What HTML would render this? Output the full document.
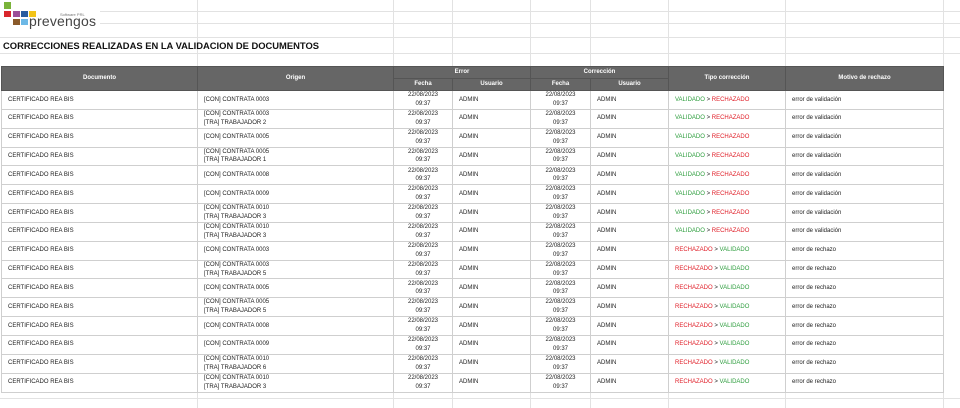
<!DOCTYPE html>
<html><head><meta charset="utf-8"><style>
body{margin:0;width:960px;height:408px;overflow:hidden;background:#fff;font-family:"Liberation Sans",Arial,sans-serif;position:relative}
.g{position:absolute;background:#e2e2e2}
.sq{position:absolute;width:7px;height:6px}
table{position:absolute;left:1px;top:66px;border-collapse:collapse;table-layout:fixed;font-size:6px;color:#222}
td,th{padding:0 0 0 6px;border:1px solid #cfcfcf;white-space:nowrap;overflow:hidden;line-height:8.8px}
th{background:#666;color:#fff;font-weight:bold;text-align:center;padding:0;border-color:#555}
tbody tr{height:18.85px}
td.c{text-align:center;padding:0}
.v{color:#2e9e3e}.r{color:#e0202a}
</style></head><body>
<div class="g" style="left:0;top:11px;width:960px;height:1px"></div>
<div class="g" style="left:0;top:23px;width:960px;height:1px"></div>
<div class="g" style="left:0;top:37px;width:960px;height:1px"></div>
<div class="g" style="left:0;top:53px;width:960px;height:1px"></div>
<div class="g" style="left:0;top:398px;width:960px;height:1px"></div>
<div class="g" style="left:197px;top:0;width:1px;height:408px"></div>
<div class="g" style="left:393px;top:0;width:1px;height:408px"></div>
<div class="g" style="left:452px;top:0;width:1px;height:408px"></div>
<div class="g" style="left:530px;top:0;width:1px;height:408px"></div>
<div class="g" style="left:590px;top:0;width:1px;height:408px"></div>
<div class="g" style="left:668px;top:0;width:1px;height:408px"></div>
<div class="g" style="left:785px;top:0;width:1px;height:408px"></div>
<div class="g" style="left:943px;top:0;width:1px;height:408px"></div>
<div style="position:absolute;left:0;top:0;width:100px;height:28px;background:#fff"></div>
<div class="sq" style="left:4px;top:2px;background:#7ab33a;height:7px"></div>
<div class="sq" style="left:4px;top:11px;background:#d9262c"></div>
<div class="sq" style="left:13px;top:11px;background:#9c4e97"></div>
<div class="sq" style="left:21px;top:11px;background:#2a5d9f"></div>
<div class="sq" style="left:29px;top:11px;background:#f2c318"></div>
<div class="sq" style="left:13px;top:19px;background:#8a5a2b"></div>
<div class="sq" style="left:21px;top:19px;background:#6cb8e6"></div>
<div style="position:absolute;left:60px;top:12px;font-size:4px;color:#777">Software PRL</div>
<div style="position:absolute;left:29px;top:14px;font-size:14px;line-height:14px;color:#444;letter-spacing:0.2px">prevengos</div>
<div style="position:absolute;left:3px;top:40px;font-size:9.4px;font-weight:bold;color:#111">CORRECCIONES REALIZADAS EN LA VALIDACION DE DOCUMENTOS</div>
<table>
<colgroup><col style="width:196px"><col style="width:196px"><col style="width:59px"><col style="width:78px"><col style="width:60px"><col style="width:78px"><col style="width:117px"><col style="width:158px"></colgroup>
<thead>
<tr style="height:12px"><th rowspan="2">Documento</th><th rowspan="2">Origen</th><th colspan="2">Error</th><th colspan="2">Corrección</th><th rowspan="2">Tipo corrección</th><th rowspan="2">Motivo de rechazo</th></tr>
<tr style="height:12px"><th>Fecha</th><th>Usuario</th><th>Fecha</th><th>Usuario</th></tr>
</thead>
<tbody>
<tr><td>CERTIFICADO REA BIS</td><td>[CON] CONTRATA 0003</td><td class="c">22/08/2023<br>09:37</td><td>ADMIN</td><td class="c">22/08/2023<br>09:37</td><td>ADMIN</td><td><span class="v">VALIDADO</span> &gt; <span class="r">RECHAZADO</span></td><td>error de validación</td></tr>
<tr><td>CERTIFICADO REA BIS</td><td>[CON] CONTRATA 0003<br>[TRA] TRABAJADOR 2</td><td class="c">22/08/2023<br>09:37</td><td>ADMIN</td><td class="c">22/08/2023<br>09:37</td><td>ADMIN</td><td><span class="v">VALIDADO</span> &gt; <span class="r">RECHAZADO</span></td><td>error de validación</td></tr>
<tr><td>CERTIFICADO REA BIS</td><td>[CON] CONTRATA 0005</td><td class="c">22/08/2023<br>09:37</td><td>ADMIN</td><td class="c">22/08/2023<br>09:37</td><td>ADMIN</td><td><span class="v">VALIDADO</span> &gt; <span class="r">RECHAZADO</span></td><td>error de validación</td></tr>
<tr><td>CERTIFICADO REA BIS</td><td>[CON] CONTRATA 0005<br>[TRA] TRABAJADOR 1</td><td class="c">22/08/2023<br>09:37</td><td>ADMIN</td><td class="c">22/08/2023<br>09:37</td><td>ADMIN</td><td><span class="v">VALIDADO</span> &gt; <span class="r">RECHAZADO</span></td><td>error de validación</td></tr>
<tr><td>CERTIFICADO REA BIS</td><td>[CON] CONTRATA 0008</td><td class="c">22/08/2023<br>09:37</td><td>ADMIN</td><td class="c">22/08/2023<br>09:37</td><td>ADMIN</td><td><span class="v">VALIDADO</span> &gt; <span class="r">RECHAZADO</span></td><td>error de validación</td></tr>
<tr><td>CERTIFICADO REA BIS</td><td>[CON] CONTRATA 0009</td><td class="c">22/08/2023<br>09:37</td><td>ADMIN</td><td class="c">22/08/2023<br>09:37</td><td>ADMIN</td><td><span class="v">VALIDADO</span> &gt; <span class="r">RECHAZADO</span></td><td>error de validación</td></tr>
<tr><td>CERTIFICADO REA BIS</td><td>[CON] CONTRATA 0010<br>[TRA] TRABAJADOR 3</td><td class="c">22/08/2023<br>09:37</td><td>ADMIN</td><td class="c">22/08/2023<br>09:37</td><td>ADMIN</td><td><span class="v">VALIDADO</span> &gt; <span class="r">RECHAZADO</span></td><td>error de validación</td></tr>
<tr><td>CERTIFICADO REA BIS</td><td>[CON] CONTRATA 0010<br>[TRA] TRABAJADOR 3</td><td class="c">22/08/2023<br>09:37</td><td>ADMIN</td><td class="c">22/08/2023<br>09:37</td><td>ADMIN</td><td><span class="v">VALIDADO</span> &gt; <span class="r">RECHAZADO</span></td><td>error de validación</td></tr>
<tr><td>CERTIFICADO REA BIS</td><td>[CON] CONTRATA 0003</td><td class="c">22/08/2023<br>09:37</td><td>ADMIN</td><td class="c">22/08/2023<br>09:37</td><td>ADMIN</td><td><span class="r">RECHAZADO</span> &gt; <span class="v">VALIDADO</span></td><td>error de rechazo</td></tr>
<tr><td>CERTIFICADO REA BIS</td><td>[CON] CONTRATA 0003<br>[TRA] TRABAJADOR 5</td><td class="c">22/08/2023<br>09:37</td><td>ADMIN</td><td class="c">22/08/2023<br>09:37</td><td>ADMIN</td><td><span class="r">RECHAZADO</span> &gt; <span class="v">VALIDADO</span></td><td>error de rechazo</td></tr>
<tr><td>CERTIFICADO REA BIS</td><td>[CON] CONTRATA 0005</td><td class="c">22/08/2023<br>09:37</td><td>ADMIN</td><td class="c">22/08/2023<br>09:37</td><td>ADMIN</td><td><span class="r">RECHAZADO</span> &gt; <span class="v">VALIDADO</span></td><td>error de rechazo</td></tr>
<tr><td>CERTIFICADO REA BIS</td><td>[CON] CONTRATA 0005<br>[TRA] TRABAJADOR 5</td><td class="c">22/08/2023<br>09:37</td><td>ADMIN</td><td class="c">22/08/2023<br>09:37</td><td>ADMIN</td><td><span class="r">RECHAZADO</span> &gt; <span class="v">VALIDADO</span></td><td>error de rechazo</td></tr>
<tr><td>CERTIFICADO REA BIS</td><td>[CON] CONTRATA 0008</td><td class="c">22/08/2023<br>09:37</td><td>ADMIN</td><td class="c">22/08/2023<br>09:37</td><td>ADMIN</td><td><span class="r">RECHAZADO</span> &gt; <span class="v">VALIDADO</span></td><td>error de rechazo</td></tr>
<tr><td>CERTIFICADO REA BIS</td><td>[CON] CONTRATA 0009</td><td class="c">22/08/2023<br>09:37</td><td>ADMIN</td><td class="c">22/08/2023<br>09:37</td><td>ADMIN</td><td><span class="r">RECHAZADO</span> &gt; <span class="v">VALIDADO</span></td><td>error de rechazo</td></tr>
<tr><td>CERTIFICADO REA BIS</td><td>[CON] CONTRATA 0010<br>[TRA] TRABAJADOR 6</td><td class="c">22/08/2023<br>09:37</td><td>ADMIN</td><td class="c">22/08/2023<br>09:37</td><td>ADMIN</td><td><span class="r">RECHAZADO</span> &gt; <span class="v">VALIDADO</span></td><td>error de rechazo</td></tr>
<tr><td>CERTIFICADO REA BIS</td><td>[CON] CONTRATA 0010<br>[TRA] TRABAJADOR 3</td><td class="c">22/08/2023<br>09:37</td><td>ADMIN</td><td class="c">22/08/2023<br>09:37</td><td>ADMIN</td><td><span class="r">RECHAZADO</span> &gt; <span class="v">VALIDADO</span></td><td>error de rechazo</td></tr>
</tbody></table>
</body></html>
